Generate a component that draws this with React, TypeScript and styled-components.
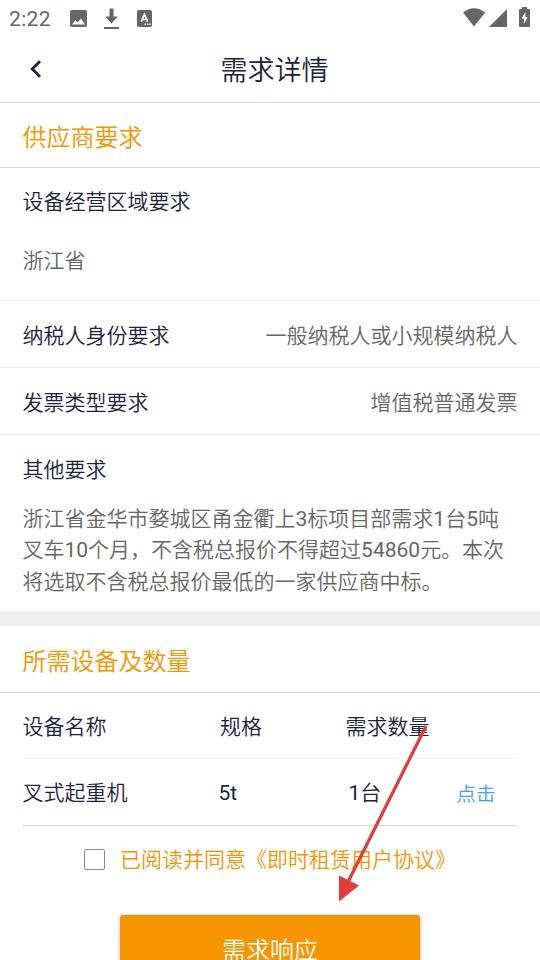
import React from "react";
import styled, { createGlobalStyle } from "styled-components";

const NAVY = "#1b2240";
const GREY = "#666666";
const ORANGE = "#f69500";

const GlobalStyle = createGlobalStyle`
  * { box-sizing: border-box; }
  html, body { margin: 0; padding: 0; background: #fff; overflow: hidden; }
  body { font-family: Roboto, "Noto Sans CJK SC", sans-serif; font-weight: 350; }
`;

const Screen = styled.div`
  position: relative;
  display: flex;
  flex-direction: column;
  width: 540px;
  height: 960px;
  overflow: hidden;
  background: #fff;
  color: ${NAVY};
  font-size: 21px;
`;

const StatusBar = styled.div`
  flex: none;
  display: flex;
  align-items: center;
  justify-content: space-between;
  height: 36px;
  padding: 0 7px 0 9px;
  color: #666;
`;

const Clock = styled.span`
  width: 60px;
  font-size: 21px;
  font-weight: 400;
  line-height: 36px;
  letter-spacing: 0.35px;
  padding-top: 1px;
`;

const StatusGroup = styled.div`
  display: flex;
  align-items: center;
  height: 36px;
`;

const TitleBar = styled.header`
  flex: none;
  display: grid;
  grid-template-columns: 72px 1fr 63px;
  align-items: center;
  height: 67px;
  border-bottom: 1px solid #dcdcdc;
`;

const BackButton = styled.button`
  display: flex;
  align-items: center;
  height: 66px;
  padding: 0 0 0 29px;
  border: 0;
  background: none;
`;

const Title = styled.h1`
  margin: 0;
  padding-top: 5px;
  text-align: center;
  font-size: 27px;
  font-weight: inherit;
  line-height: 61px;
  height: 66px;
`;

const SectionHeading = styled.h2<{ $height: number }>`
  flex: none;
  margin: 0;
  height: ${(p) => p.$height}px;
  padding: 5px 0 0 22.5px;
  border-bottom: 1px solid #d9d9d9;
  color: ${ORANGE};
  font-size: 24px;
  font-weight: inherit;
  line-height: ${(p) => p.$height - 5}px;
`;

const Field = styled.div`
  flex: none;
  display: flex;
  justify-content: space-between;
  height: 67px;
  padding: 3px 22.5px 0;
  border-bottom: 1px solid #eeeeee;
  line-height: 64px;
`;

const StackedField = styled.div`
  flex: none;
  display: flex;
  flex-direction: column;
  height: 133px;
  padding: 19px 22.5px 0;
  gap: 28px;
  border-bottom: 1px solid #eeeeee;
  line-height: 31px;
`;

const NoteField = styled.div`
  flex: none;
  height: 176px;
  padding: 20px 22.5px 0;
  line-height: 31.5px;
`;

const Value = styled.span`
  color: ${GREY};
`;

const Note = styled.p`
  margin: 17px 0 0;
  color: ${GREY};
  white-space: nowrap;
`;

const Latin = styled.span`
  font-weight: 400;
`;

const Divider = styled.div`
  flex: none;
  height: 15px;
  background: #efefef;
`;

const TableRow = styled.div<{ $line: string; $height: number }>`
  display: grid;
  grid-template-columns: 156px 125px 1fr auto;
  margin: 0 22px 0 22.5px;
  height: ${(p) => p.$height}px;
  padding-top: 2px;
  border-bottom: 1px solid ${(p) => p.$line};
  line-height: 65px;
`;

const SpecCell = styled.span`
  width: 125px;
  text-align: center;
`;

const ShortSpecCell = styled.span`
  padding-left: 40px;
  font-weight: 400;
`;

const CountCell = styled.span<{ $indent: number }>`
  padding-left: ${(p) => p.$indent}px;
`;

const EquipmentTable = styled.div`
  flex: none;
`;

const DetailLink = styled.a`
  padding: 1px 22.5px 0 0;
  color: #409eff;
  font-size: 19.5px;
`;

const Agreement = styled.label`
  flex: none;
  display: flex;
  align-items: center;
  height: 67px;
  padding-left: 84px;
  gap: 15px;
  color: ${ORANGE};
  line-height: 24px;
`;

const Checkbox = styled.span`
  width: 21px;
  height: 21px;
  border: 1px solid #8c8c8c;
  border-radius: 2px;
  background: #fff;
`;

const SubmitButton = styled.button`
  flex: none;
  align-self: center;
  width: 300px;
  height: 69px;
  margin-top: 22px;
  padding: 3px 0 0;
  border: 0;
  border-radius: 3px;
  background: ${ORANGE};
  box-shadow: 0 1px 4px rgba(0, 0, 0, 0.3);
  color: #fff;
  font: inherit;
  font-size: 24px;
  line-height: 66px;
`;

const Pointer = styled.svg`
  position: absolute;
  left: 330px;
  top: 720px;
  pointer-events: none;
`;

const StatusIcons = () => (
  <svg width="84" height="36" viewBox="69 0 84 36" fill="#666">
    <path fillRule="evenodd" d="M72 10h13q2 0 2 2v13q0 2-2 2H72q-2 0-2-2V12q0-2 2-2Zm0 14.500h13l-4-6-3.200 4.100-2.400-2.600Z" />
    <path d="M109.500 8.500h4v8h4.200l-6.200 7-6.200-7h4.200ZM104 27h15v2h-15z" />
    <rect x="137" y="10" width="15" height="17" rx="1.8" />
    <path d="M141.200 21.700 144.400 14.300 147.600 21.700M142.300 19.500h4.200" fill="none" stroke="#fff" strokeWidth="1.7" />
    <path d="M144.500 23.600h1.400v1.400h-1.400zM147 23.600h1.400v1.400H147zM149.400 23.600h1.400v1.400h-1.400z" fill="#fff" />
  </svg>
);

const SignalIcons = () => (
  <svg width="70" height="36" viewBox="463 0 70 36" fill="#666">
    <path d="M463 12.500Q474 4 485.200 12.500L474 26.500Z" />
    <path d="M507 9v18h-18Z" />
    <path fillRule="evenodd" d="M522 7h5v2h2q1 0 1 1v16q0 1-1 1h-9q-1 0-1-1V10q0-1 1-1h2Zm3.400 5-3.900 6.500h2.400V24l3.700-6.700h-2.200Z" />
  </svg>
);

export default function App() {
  return (
    <>
      <GlobalStyle />
      <Screen>
        <StatusBar>
          <StatusGroup>
            <Clock>2:22</Clock>
            <StatusIcons />
          </StatusGroup>
          <SignalIcons />
        </StatusBar>

        <TitleBar>
          <BackButton aria-label="返回">
            <svg width="14" height="20" viewBox="0 0 14 20" fill="none" stroke={NAVY} strokeWidth="2.8">
              <path d="M11 2.200 3.200 10l7.800 7.800" />
            </svg>
          </BackButton>
          <Title>需求详情</Title>
        </TitleBar>

        <SectionHeading $height={65}>供应商要求</SectionHeading>
        <StackedField>
          <span>设备经营区域要求</span>
          <Value>浙江省</Value>
        </StackedField>
        <Field>
          <span>纳税人身份要求</span>
          <Value>一般纳税人或小规模纳税人</Value>
        </Field>
        <Field>
          <span>发票类型要求</span>
          <Value>增值税普通发票</Value>
        </Field>
        <NoteField>
          <span>其他要求</span>
          <Note>
            浙江省金华市婺城区甬金衢上<Latin>3</Latin>标项目部需求<Latin>1</Latin>台<Latin>5</Latin>吨
            <br />
            叉车<Latin>10</Latin>个月，不含税总报价不得超过<Latin>54860</Latin>元。本次
            <br />
            将选取不含税总报价最低的一家供应商中标。
          </Note>
        </NoteField>

        <Divider />

        <SectionHeading $height={67}>所需设备及数量</SectionHeading>
        <EquipmentTable>
          <TableRow $height={66} $line="#f3f3f3">
            <span>设备名称</span>
            <SpecCell>规格</SpecCell>
            <CountCell $indent={42}>需求数量</CountCell>
          </TableRow>
          <TableRow $height={67} $line="#dcdcdc">
            <span>叉式起重机</span>
            <ShortSpecCell>5t</ShortSpecCell>
            <CountCell $indent={45}>
              <Latin>1</Latin>台
            </CountCell>
            <DetailLink>点击</DetailLink>
          </TableRow>
        </EquipmentTable>

        <Agreement>
          <Checkbox />
          <span>已阅读并同意《即时租赁用户协议》</span>
        </Agreement>
        <SubmitButton>需求响应</SubmitButton>

        <Pointer width="110" height="190" viewBox="330 720 110 190">
          <path d="M426 726 348 882" stroke="#e33c3c" strokeWidth="3.2" />
          <path d="M339 875.500 359 885.500 339 901.500Z" fill="#e33c3c" />
        </Pointer>
      </Screen>
    </>
  );
}
